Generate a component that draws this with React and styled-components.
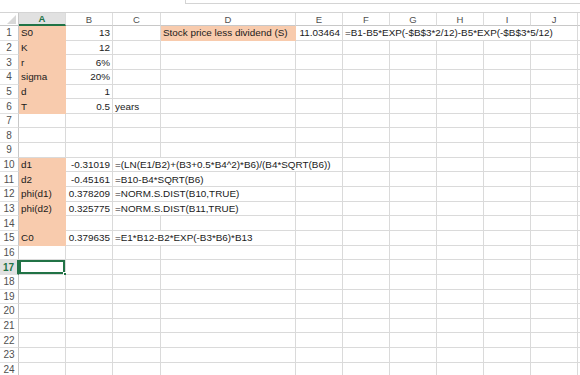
import React from "react";
import styled, { createGlobalStyle, css } from "styled-components";

const GlobalStyle = createGlobalStyle`
  html, body { margin: 0; padding: 0; background: #ffffff; }
  body { font-family: "Liberation Sans", Arial, sans-serif; overflow: hidden; }
`;

const Page = styled.div`
  width: 580px;
  height: 375px;
  overflow: hidden;
  background: #ffffff;
`;

const TopStrip = styled.div`
  height: 12px;
  display: flex;
`;

const StripSpacer = styled.div`
  width: 185px;
`;

const FormulaBox = styled.div`
  flex: 1;
  height: 3px;
  border-left: 1px solid #d4d4d4;
  border-bottom: 1px solid #d4d4d4;
`;

const Sheet = styled.div`
  display: grid;
  grid-template-columns: 19px 47px 47px 48px 135px 47px 47px 47px 47px 47px 47px 1fr;
  grid-template-rows: 13px;
  grid-auto-rows: 14.65px;
  border-top: 1px solid #d4d4d4;
`;

const Corner = styled.div`
  position: relative;
  border-right: 1px solid #c8c8c8;
  border-bottom: 1px solid #c8c8c8;
  box-sizing: border-box;
  svg { position: absolute; right: 2px; bottom: 1px; }
`;

const ColHead = styled.div`
  box-sizing: border-box;
  display: flex;
  align-items: center;
  justify-content: center;
  font-size: 9.5px;
  color: #505050;
  border-right: 1px solid #dcdcdc;
  border-bottom: 1px solid #c8c8c8;
  ${(p) =>
    p.$active &&
    css`
      background: #e1e1e1;
      color: #217346;
      font-weight: bold;
      border-bottom: 2px solid #217346;
    `}
`;

const RowHead = styled.div`
  box-sizing: border-box;
  display: flex;
  align-items: center;
  justify-content: center;
  font-size: 10px;
  color: #505050;
  border-right: 1px solid #c8c8c8;
  border-bottom: 1px solid #e1e1e1;
  ${(p) =>
    p.$active &&
    css`
      background: #e1e1e1;
      color: #217346;
      font-weight: bold;
      border-right: 2px solid #217346;
    `}
`;

const Cell = styled.div`
  box-sizing: border-box;
  position: relative;
  display: flex;
  align-items: center;
  justify-content: ${(p) => (p.$align === "right" ? "flex-end" : "flex-start")};
  padding: 0 2px;
  font-size: 9.9px;
  color: #1a1a1a;
  white-space: nowrap;
  grid-column: span ${(p) => p.$span || 1};
  background: ${(p) => (p.$fill ? "#f8cbad" : "#ffffff")};
  border-right: 1px solid ${(p) => (p.$fill ? "#f8cbad" : "#dadada")};
  border-bottom: 1px solid ${(p) => (p.$fill ? "#f8cbad" : "#dadada")};
  ${(p) =>
    p.$selected &&
    css`
      box-shadow: inset 0 0 0 2px #217346;
      &::after {
        content: "";
        position: absolute;
        right: -3px;
        bottom: -3px;
        width: 5px;
        height: 5px;
        background: #217346;
        border: 1px solid #ffffff;
        box-sizing: border-box;
      }
    `}
`;

const COLS = ["A", "B", "C", "D", "E", "F", "G", "H", "I", "J"];

const F = (text, extra = {}) => ({ text, ...extra });

const DATA = {
  1: [F("S0", { fill: true }), F("13", { align: "right" }), F(""), F("Stock price less dividend (S)", { fill: true }), F("11.03464", { align: "right" }), F("=B1-B5*EXP(-$B$3*2/12)-B5*EXP(-$B$3*5/12)", { span: 5 })],
  2: [F("K", { fill: true }), F("12", { align: "right" })],
  3: [F("r", { fill: true }), F("6%", { align: "right" })],
  4: [F("sigma", { fill: true }), F("20%", { align: "right" })],
  5: [F("d", { fill: true }), F("1", { align: "right" })],
  6: [F("T", { fill: true }), F("0.5", { align: "right" }), F("years")],
  10: [F("d1", { fill: true }), F("-0.31019", { align: "right" }), F("=(LN(E1/B2)+(B3+0.5*B4^2)*B6)/(B4*SQRT(B6))", { span: 3 })],
  11: [F("d2", { fill: true }), F("-0.45161", { align: "right" }), F("=B10-B4*SQRT(B6)", { span: 2 })],
  12: [F("phi(d1)", { fill: true }), F("0.378209", { align: "right" }), F("=NORM.S.DIST(B10,TRUE)", { span: 2 })],
  13: [F("phi(d2)", { fill: true }), F("0.325775", { align: "right" }), F("=NORM.S.DIST(B11,TRUE)", { span: 2 })],
  14: [F("", { fill: true })],
  15: [F("C0", { fill: true }), F("0.379635", { align: "right" }), F("=E1*B12-B2*EXP(-B3*B6)*B13", { span: 2 })],
  17: [F("", { selected: true })],
};

function buildRow(n) {
  const given = DATA[n] || [];
  const cells = [];
  let col = 0;
  given.forEach((c) => {
    cells.push(c);
    col += c.span || 1;
  });
  while (col < COLS.length) {
    cells.push(F(""));
    col += 1;
  }
  cells.push(F("")); // trailing partial column
  return cells;
}

export default function App() {
  const rows = Array.from({ length: 24 }, (_, i) => i + 1);
  return (
    <Page>
      <GlobalStyle />
      <TopStrip>
        <StripSpacer />
        <FormulaBox />
      </TopStrip>
      <Sheet>
        <Corner>
          <svg width="9" height="9" viewBox="0 0 9 9">
            <polygon points="9,0 9,9 0,9" fill="#d8d8d8" />
          </svg>
        </Corner>
        {COLS.map((c) => (
          <ColHead key={c} $active={c === "A"}>
            {c}
          </ColHead>
        ))}
        <ColHead />
        {rows.map((n) => (
          <React.Fragment key={n}>
            <RowHead $active={n === 17}>{n}</RowHead>
            {buildRow(n).map((c, i) => (
              <Cell
                key={i}
                $fill={c.fill}
                $align={c.align}
                $span={c.span}
                $selected={c.selected}
              >
                {c.text}
              </Cell>
            ))}
          </React.Fragment>
        ))}
      </Sheet>
    </Page>
  );
}
